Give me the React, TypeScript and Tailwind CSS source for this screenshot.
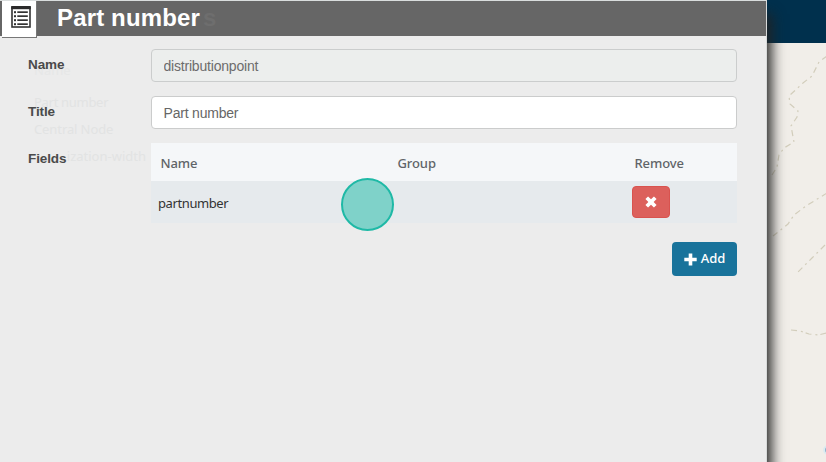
import React from "react";

const sans = "font-['Liberation_Sans',Arial,sans-serif]";
const noto = "font-['Noto_Sans',sans-serif]";

function ListIcon() {
  return (
    <svg width="20" height="22" viewBox="0 0 20 22" className="ml-[9px] mt-[5px] block">
      <rect x="1" y="1.5" width="18" height="19.5" fill="#fff" stroke="#333" strokeWidth="1.6" />
      <rect x="0.2" y="0" width="19.6" height="3.2" fill="#2b2b2b" />
      {[6, 10, 14, 18].map((y) => (
        <g key={y} fill="#333">
          <rect x="3" y={y - 0.8} width="2" height="2" />
          <rect x="6.3" y={y - 0.7} width="10.5" height="1.7" />
        </g>
      ))}
    </svg>
  );
}

function MapPane() {
  return (
    <div className="flex h-full w-[59px] flex-col bg-[#f1eee9]">
      <div className="h-[43px] shrink-0 bg-[#00304d]" />
      <svg width="59" height="419" viewBox="767 43 59 419" fill="none" stroke="#d2cdbb" strokeWidth="1.2">
        <path
          strokeDasharray="6 4 2 4"
          d="M827 56 L819 62 L812 76 L803 83 L789 96 L790 104 L798 111 L797 117 L791 126 L794 142 L784 148 L779 155 L777 167 L772 175"
        />
        <path strokeDasharray="6 4 2 4" d="M827 193 L806 206 L794 215 L788 224 L773 236" />
        <path strokeDasharray="6 4 2 4" d="M825 245 L812 258 L796 274" />
        <path strokeDasharray="6 4 2 3" d="M791 330 L800 331 L809 334 L818 335 L827 333" />
        <circle cx="828" cy="450" r="4" fill="#8fb3cc" stroke="#dcebf1" strokeWidth="2" />
      </svg>
    </div>
  );
}

function GhostList() {
  return (
    <div className={`pointer-events-none absolute left-[28px] top-[52px] h-[118px] w-[118px] text-[13px] leading-[27px] text-[#e2e3e3] ${noto}`}>
      <div className="flex h-full flex-col whitespace-nowrap pl-[6px] pt-[5px]">
        <div className="h-[33px] text-[#e6e7e7]">Name</div>
        <div className="h-[27px] tracking-[-0.3px]">Part number</div>
        <div className="h-[27px] tracking-[-0.1px]">Central Node</div>
        <div className="self-end">ization-width</div>
      </div>
    </div>
  );
}

function Label({ children }: { children: React.ReactNode }) {
  return (
    <label className={`w-[123px] shrink-0 text-[13.5px] font-bold leading-[32px] tracking-[-0.1px] text-[#4a4a4a] ${sans}`}>
      {children}
    </label>
  );
}

export default function App() {
  return (
    <div className="flex h-[462px] w-[826px] overflow-hidden bg-[#f1eee9]">
      <main className="relative z-10 flex h-full w-[767px] shrink-0 flex-col border-r border-[#d8dada] bg-[#ececec] shadow-[5px_14px_12px_0px_rgba(34,34,34,0.95)]">
        <header className="relative flex h-9 shrink-0 border-t border-[#d9dddd] bg-[#666]">
          <div className="z-10 ml-[2px] h-[37px] w-[35px] shrink-0 border-b border-r border-[#777] bg-white">
            <ListIcon />
          </div>
          <h1 className={`ml-[20px] text-[24px] font-bold leading-[34px] tracking-[0.15px] text-white ${sans}`}>
            Part number
          </h1>
          <span className={`absolute left-[203px] top-0 text-[24px] font-bold leading-[34px] text-[#6e6e6e] ${sans}`}>s</span>
        </header>
        <GhostList />
        <form className="relative flex flex-col pl-[28px] pr-[29px] pt-[13px]">
          <div className="flex h-[47px]">
            <Label>Name</Label>
            <input
              readOnly
              value="distributionpoint"
              className={`h-[33px] w-[586px] rounded-[4px] border border-[#cbcdcd] bg-[#eceeed] px-[11.5px] text-[14px] tracking-[-0.2px] text-[#6c6c6c] outline-none ${sans}`}
            />
          </div>
          <div className="flex h-[47px]">
            <Label>Title</Label>
            <input
              readOnly
              value="Part number"
              className={`h-[33px] w-[586px] rounded-[4px] border border-[#cbcccc] bg-white px-[11.5px] text-[14px] tracking-[-0.2px] text-[#666] outline-none ${sans}`}
            />
          </div>
          <div className="flex">
            <Label>Fields</Label>
            <div className={`w-[586px] text-[13px] ${noto}`}>
              <div className="grid h-[38px] grid-cols-[237px_237px_112px] items-center bg-[#f5f7f9] pl-[9.5px] pt-[4px] font-medium tracking-[-0.1px] text-[#5f6468]">
                <span>Name</span>
                <span>Group</span>
                <span>Remove</span>
              </div>
              <div className="relative flex h-[42px] items-center bg-[#e6eaed] pl-[7px] text-[#333]">
                <span className="mt-[4px] w-[474px] tracking-[-0.4px]">partnumber</span>
                <button type="button" aria-label="Remove" className="flex h-[32px] w-[38px] items-center justify-center rounded-[4px] border border-[#d9534f] bg-[#dc605c] pr-px">
                  <svg width="12" height="12" viewBox="0.3 0.3 11.4 11.4" fill="#fff">
                    <path d="M3.2 0.7L6 3.5L8.8 0.7L11.3 3.2L8.5 6L11.3 8.8L8.8 11.3L6 8.5L3.2 11.3L0.7 8.8L3.5 6L0.7 3.2Z" />
                  </svg>
                </button>
                <div className="absolute left-[190px] top-[-3px] h-[52.5px] w-[52.5px] rounded-full border-2 border-[#1fb9a6] bg-[#7fd2c9]" />
              </div>
              <div className="flex justify-end pt-[19px]">
                <button type="button" className="flex h-[34px] w-[65px] items-center justify-center gap-[4px] rounded-[4px] bg-[#19739b] font-medium text-white">
                  <svg width="13" height="13" viewBox="0 0 13 13" fill="#fff">
                    <path d="M4.7 0.5H8.3V4.7H12.7V8.3H8.3V12.5H4.7V8.3H0.3V4.7H4.7Z" />
                  </svg>
                  Add
                </button>
              </div>
            </div>
          </div>
        </form>
      </main>
      <MapPane />
    </div>
  );
}
